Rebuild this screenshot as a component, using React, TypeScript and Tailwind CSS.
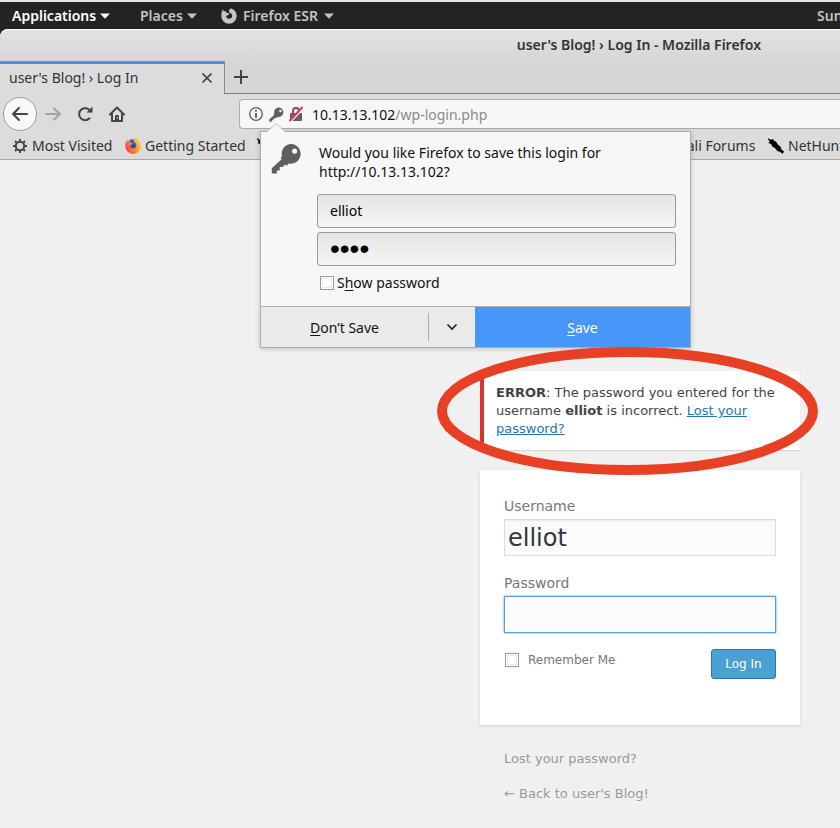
import React from "react";

function Caret() {
  return (
    <svg width="10" height="6" viewBox="0 0 10 6" className="shrink-0" aria-hidden="true">
      <path d="M0 0.5h10L5 5.8z" fill="currentColor" />
    </svg>
  );
}

function KeyIcon({ size }: { size: number }) {
  return (
    <svg width={size} height={size} viewBox="0 0 32 32" className="shrink-0" aria-hidden="true">
      <path
        fill="#5f5f5f"
        fillRule="evenodd"
        d="M21 1a10 10 0 0 0-9.6 12.700l-1.600 1.600l1.200 1.600L0.800 26V31.500h5.200v-3h3v-3.600h3l2.600-2.700l1.800 1.200l1.600-2.300A10.200 10.200 0 1 0 21 1zm3.400 4.800a2.600 2.600 0 1 1 0 5.200a2.600 2.600 0 0 1 0-5.200z"
      />
    </svg>
  );
}

function FirefoxMono() {
  return (
    <svg width="16" height="16" viewBox="0 0 16 16" className="shrink-0" aria-hidden="true">
      <path
        fill="currentColor"
        d="M8 15.700A7.700 7.700 0 0 1 0.300 8C0.300 5 0.900 3 2 1.300L2.700 3.200L4.600 2.900C4.900 3.900 5.300 4.600 6.300 5L8.600 5.300L7.300 7L5.200 8C5.200 9.700 6.400 10.800 8 10.800C9.900 10.800 11.200 9.600 11.200 7.800C11.200 6.300 10.300 5.400 9.300 4.900L8.300 4.500C7.400 2.700 8.300 1 9.700 0.400C13 1 15.700 4 15.700 8A7.700 7.700 0 0 1 8 15.700z"
      />
    </svg>
  );
}

function FirefoxColor() {
  return (
    <svg width="16" height="16" viewBox="0 0 16 16" className="shrink-0" aria-hidden="true">
      <defs>
        <linearGradient id="fox" x1="1" y1="0.2" x2="0" y2="0.8">
          <stop offset="0" stopColor="#ffd83a" />
          <stop offset="0.450" stopColor="#ff9a1e" />
          <stop offset="1" stopColor="#ff2a55" />
        </linearGradient>
      </defs>
      <circle cx="8" cy="7" r="6" fill="#1f5fd0" />
      <path
        fill="url(#fox)"
        d="M8 16A7.800 7.800 0 0 1 0.300 8C0.300 5 1 3.300 2.200 1.800L2.900 3.500L5 3.200L6.500 5L8 5.400L6.500 7L5.300 7.300C5 9.500 6.500 10.800 8.300 10.600C10.500 10.500 11.500 9 11.300 7.200C11.200 5.500 10 4.500 9 4L8 1C9.500 -0.200 10.500 0.200 11.500 0.800C14 2 15.800 5 15.800 8A7.800 7.800 0 0 1 8 16z"
      />
      <path fill="#1c3fae" d="M6 7.200L8 6.200L9.200 7.500L8.500 9L6.800 8.800z" />
    </svg>
  );
}

function KaliIcon() {
  return (
    <svg width="16" height="16" viewBox="0 0 16 16" className="shrink-0" aria-hidden="true">
      <path
        fill="#000"
        stroke="#000"
        strokeWidth="0.600"
        d="M0 0.500L2.500 2L5 1.300L5.500 2.800L8 4L9.500 6.500L12.500 9L13 11.500L15.800 13.500L14.500 15.500L12 13.500L9 12.500L7.500 10L4.500 8.500L3.500 6L0.800 4.800L2 3.800z"
      />
    </svg>
  );
}

function TopBar() {
  return (
    <header className="flex h-[29px] items-center overflow-hidden whitespace-nowrap border-t-2 border-[#e4e6e8] bg-[#232323] pl-3 text-[14px] font-semibold text-[#c4c4c4]">
      <button className="flex w-32 items-center gap-1 text-white">
        Applications <Caret />
      </button>
      <button className="flex w-[81px] items-center gap-1">
        Places <Caret />
      </button>
      <button className="flex items-center gap-[6px]">
        <FirefoxMono />
        Firefox ESR <Caret />
      </button>
      <span className="ml-auto w-[23px] shrink-0 overflow-hidden">Sun</span>
    </header>
  );
}

function SavePrompt() {
  const field =
    "h-[34px] w-full rounded-[3px] border border-[#999] bg-gradient-to-b from-[#e5e5e5] to-[#f5f5f5] px-3 text-black outline-none";
  return (
    <section
      aria-label="Save login"
      className="absolute left-[21px] top-8 z-10 w-[431px] border border-[#adadad] bg-[#f7f7f7] text-[14px] text-[#111] shadow-[0_1px_5px_rgba(0,0,0,0.2)]"
    >
      <svg width="20" height="10" viewBox="0 0 20 10" className="absolute -top-[9px] left-[5px]" aria-hidden="true">
        <path d="M0 9.500L10 0.500L20 9.500V10H0z" fill="#f7f7f7" />
        <path d="M0 9.500L10 0.500L20 9.500" fill="none" stroke="#c4c4c4" />
      </svg>
      <div className="flex gap-[15px] pb-[14px] pl-[10px] pr-[14px] pt-[11px]">
        <KeyIcon size={31} />
        <div className="flex grow flex-col">
          <p className="mb-[13px] pl-[2px] leading-[19px]">
            Would you like Firefox to save this login for
            <br />
            http://10.13.13.102?
          </p>
          <div className="flex flex-col gap-1">
            <input aria-label="Login name" className={field + " pb-[2px]"} defaultValue="elliot" />
            <input
              aria-label="Login password"
              type="password"
              className={field + " font-['Liberation_Sans',sans-serif] text-[28px]"}
              defaultValue="pass"
            />
          </div>
          <label className="mt-[7px] flex h-[19px] items-center gap-[3px] pl-[3px]">
            <input
              type="checkbox"
              className="size-[14px] appearance-none border border-[#999] bg-white shadow-[inset_0_0_0_1px_#fff,inset_0_0_0_2px_#e8e8e8]"
            />
            <span>
              S<u className="underline-offset-2">h</u>ow password
            </span>
          </label>
        </div>
      </div>
      <div className="flex h-[41px] border-t border-[#adadad] bg-[#eaeaea]">
        <button className="w-[167px]">
          <u className="underline-offset-2">D</u>on’t Save
        </button>
        <button
          aria-label="More choices"
          className="my-[6px] flex w-[47px] items-center justify-center border-l border-[#adadad]"
        >
          <svg width="12" height="8" viewBox="0 0 12 8" aria-hidden="true">
            <path d="M1.500 1.500L6 6L10.500 1.500" fill="none" stroke="#222" strokeWidth="1.700" />
          </svg>
        </button>
        <button className="grow bg-[#4797f8] text-white">
          <u className="underline-offset-2">S</u>ave
        </button>
      </div>
    </section>
  );
}

function Toolbar() {
  return (
    <div className="flex h-[40px] items-center pl-[3px]">
      <button
        aria-label="Back"
        className="flex size-[34px] items-center justify-center rounded-full border border-[#9c9c9c] bg-[#f9f9f9]"
      >
        <svg width="18" height="16" viewBox="0 0 18 16" fill="none" stroke="#444" strokeWidth="2" strokeLinecap="round" strokeLinejoin="round">
          <path d="M16 8H2M8 2L2 8L8 14" />
        </svg>
      </button>
      <button aria-label="Forward" className="ml-2">
        <svg width="16" height="14" viewBox="0 0 16 14" fill="none" stroke="#a3a3a3" strokeWidth="2" strokeLinecap="round" strokeLinejoin="round">
          <path d="M1 7H15M9 1.500L15 7L9 12.500" />
        </svg>
      </button>
      <button aria-label="Reload" className="ml-4">
        <svg width="16" height="16" viewBox="0 0 16 16" fill="none">
          <path d="M13.300 5.200A6 6 0 1 0 12.500 12.300" stroke="#444" strokeWidth="2" strokeLinecap="round" />
          <path d="M15.500 0.500V6.500H9.500z" fill="#444" />
        </svg>
      </button>
      <button aria-label="Home" className="ml-4">
        <svg width="16" height="16" viewBox="0 0 16 16" fill="none" stroke="#444" strokeWidth="2" strokeLinecap="round" strokeLinejoin="round">
          <path d="M1 8.500L8 1.500L15 8.500M3 7.500V15H13V7.500" />
          <path fill="#444" stroke="none" d="M6 15V10a1 1 0 0 1 1-1h2a1 1 0 0 1 1 1V15z" />
          <path fill="#dcdcdc" stroke="none" d="M8 11h1v1.500h-1z" />
        </svg>
      </button>
      <div className="relative ml-[114px] min-w-0 grow">
        <div className="flex h-[30px] items-center gap-1 rounded-l-[4px] border border-r-0 border-[#adadad] bg-[#f7f7f7] pl-[9px]">
          <svg width="14" height="14" viewBox="0 0 14 14" fill="none" stroke="#5f5f5f" className="shrink-0" aria-hidden="true">
            <circle cx="7" cy="7" r="6.300" strokeWidth="1.300" />
            <path d="M7 6V11M7 3V4.800" strokeWidth="1.800" />
          </svg>
          <span className="ml-[2px] flex">
            <KeyIcon size={15} />
          </span>
          <svg width="16" height="16" viewBox="0 0 16 16" className="shrink-0" aria-hidden="true">
            <path d="M5 8V5a3 3 0 0 1 6 0V8" fill="none" stroke="#5f5f5f" strokeWidth="2" />
            <rect x="2" y="7" width="12" height="8" rx="1" fill="#5f5f5f" />
            <path d="M2.500 16L16 2" stroke="#f7f7f7" strokeWidth="1.500" />
            <path d="M1.500 15L14.500 1" stroke="#f2304e" strokeWidth="2" />
          </svg>
          <p aria-label="Address" className="ml-1 text-[14px] text-[#8a8a8a]">
            <span className="text-[#111]">10.13.13.102</span>/wp-login.php
          </p>
        </div>
        <SavePrompt />
      </div>
    </div>
  );
}

function Browser() {
  return (
    <div className="bg-[#232323] text-[14px] text-[#333]">
      <div className="rounded-tl-lg bg-[#d6d6d6]">
        <div className="flex h-8 items-center justify-end rounded-tl-lg border-t border-white bg-gradient-to-b from-[#e3e3e3] to-[#d6d6d6] pb-[2px] pr-[79px] font-semibold">
          <h1>user's Blog! › Log In - Mozilla Firefox</h1>
        </div>
        <div className="flex h-[33px]">
          <div className="flex w-[225px] items-center justify-between border-r border-t border-[#8a8a8a] bg-[#dcdcdc] pb-px pl-[9px] pr-3 shadow-[inset_0_2px_0_#4a90d9]">
            <span>user's Blog! › Log In</span>
            <button aria-label="Close tab">
              <svg width="10" height="10" viewBox="0 0 10 10" stroke="#444" strokeWidth="1.600">
                <path d="M0.500 0.500L9.500 9.500M9.500 0.500L0.500 9.500" />
              </svg>
            </button>
          </div>
          <div className="flex grow items-center border-b border-[#7c7c7c] pl-[9px]">
            <button aria-label="New tab">
              <svg width="14" height="14" viewBox="0 0 14 14" stroke="#444" strokeWidth="2">
                <path d="M7 0V14M0 7H14" />
              </svg>
            </button>
          </div>
        </div>
      </div>
      <div className="border-b border-[#aaa] bg-[#dcdcdc]">
        <Toolbar />
        <nav className="flex h-[25px] items-center overflow-hidden whitespace-nowrap pb-[2px] pl-[12px]">
          <a href="#" className="flex w-[113px] shrink-0 items-center gap-1">
            <svg width="16" height="16" viewBox="0 0 16 16" fill="none" stroke="#444" aria-hidden="true">
              <circle cx="8" cy="8" r="4.200" strokeWidth="2" />
              <path
                strokeWidth="2"
                d="M8 1V3M8 13V15M1 8H3M13 8H15M3 3L4.500 4.500M11.500 11.500L13 13M3 13L4.500 11.500M11.500 4.500L13 3"
              />
            </svg>
            Most Visited
          </a>
          <a href="#" className="flex w-[132px] shrink-0 items-center gap-1">
            <FirefoxColor />
            Getting Started
          </a>
          <a href="#" aria-label="Kali Linux" className="w-[421px] shrink-0">
            <KaliIcon />
          </a>
          <a href="#" className="w-[90px] shrink-0">
            Kali Forums
          </a>
          <a href="#" className="flex shrink-0 items-center gap-1">
            <KaliIcon />
            NetHunter
          </a>
        </nav>
      </div>
    </div>
  );
}

function LoginPage() {
  const field =
    "mt-[3px] h-[37px] w-full border bg-[#fbfbfb] px-[3px] text-2xl text-[#32373c] outline-none";
  return (
    <main className="flex grow justify-end pr-10 pt-[211px] font-['DejaVu_Sans',sans-serif] text-[13px] text-[#444]">
      <div className="w-80">
        <div className="relative border-l-4 border-[#dc3232] bg-white px-3 pb-3 pt-[13px] leading-[18px] shadow-[0_1px_1px_rgba(0,0,0,0.1)]">
          <p>
            <strong>ERROR</strong>: The password you entered for the username <strong>elliot</strong> is incorrect.{" "}
            <a href="#" className="text-[#2576ad] underline">
              Lost your password?
            </a>
          </p>
          <svg
            width="381"
            height="128"
            viewBox="0 0 381 128"
            className="pointer-events-none absolute -left-[47px] -top-6 z-20 max-w-none"
            aria-hidden="true"
          >
            <ellipse cx="190.500" cy="64" rx="185.500" ry="59" fill="none" stroke="#e84024" strokeWidth="10" />
          </svg>
        </div>
        <form className="mt-5 bg-white px-6 pb-[46px] pt-[27px] text-[#777] shadow-[0_1px_3px_rgba(0,0,0,0.13)]">
          <label className="block text-[14px] leading-[19px]">
            Username
            <input
              className={field + " border-[#ddd] shadow-[inset_0_1px_2px_rgba(0,0,0,0.07)]"}
              defaultValue="elliot"
            />
          </label>
          <label className="mt-[18px] block text-[14px] leading-[19px]">
            Password
            <input type="password" className={field + " border-[#5b9dd9] shadow-[0_0_2px_rgba(30,140,190,0.8)]"} />
          </label>
          <div className="mt-4 flex items-start justify-between">
            <label className="flex h-[21px] items-center gap-[9px] pl-px text-[12px]">
              <input
                type="checkbox"
                className="size-[14px] appearance-none border border-[#999] bg-white shadow-[inset_0_0_0_1px_#fff,inset_0_0_0_2px_#e8e8e8]"
              />
              Remember Me
            </label>
            <button
              type="button"
              className="h-[30px] w-[65px] rounded-[3px] border border-[#2e74b0] bg-[#4a9fd3] text-[12px] text-white"
            >
              Log In
            </button>
          </div>
        </form>
        <nav className="mt-[25px] flex flex-col gap-[17px] px-6 leading-[18px] text-[#999]">
          <a href="#">Lost your password?</a>
          <a href="#">← Back to user's Blog!</a>
        </nav>
      </div>
    </main>
  );
}

export default function App() {
  return (
    <div className="flex min-h-screen flex-col overflow-hidden bg-[#f0f0f0] font-['Noto_Sans',sans-serif]">
      <TopBar />
      <Browser />
      <LoginPage />
    </div>
  );
}
